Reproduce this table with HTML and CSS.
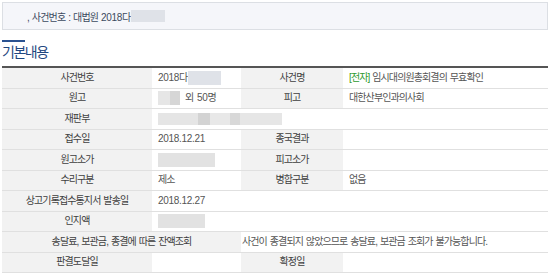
FILE: index.html
```html
<!DOCTYPE html>
<html lang="ko">
<head>
<meta charset="utf-8">
<link rel="stylesheet" href="styles.css">
</head>
<body>
<div class="page">
  <div class="summary">
    <span>, 사건번호 : 대법원 <span class="num">2018</span>다</span><span class="blur blur-top"></span>
  </div>
  <h2 class="section-title">기본내용</h2>
  <table class="info">
    <colgroup>
      <col class="c1"><col class="c2"><col class="c3"><col class="c4">
    </colgroup>
    <tr>
      <th>사건번호</th>
      <td><span class="inline"><span class="num">2018</span>다<span class="blur b-num"></span></span></td>
      <th>사건명</th>
      <td><span class="tag">[전자]</span> 임시대의원총회결의 무효확인</td>
    </tr>
    <tr>
      <th>원고</th>
      <td><span class="inline"><span class="blur b-name1"></span><span class="blur b-name2"></span><span class="gap">외 <span class="num">50</span>명</span></span></td>
      <th>피고</th>
      <td>대한산부인과의사회</td>
    </tr>
    <tr>
      <th>재판부</th>
      <td colspan="3"><span class="inline"><span class="blur b-court1"></span><span class="blur b-court2"></span><span class="blur b-court3"></span><span class="blur b-court4"></span><span class="blur b-court5"></span></span></td>
    </tr>
    <tr>
      <th>접수일</th>
      <td class="num">2018.12.21</td>
      <th>종국결과</th>
      <td></td>
    </tr>
    <tr>
      <th>원고소가</th>
      <td><span class="inline"><span class="blur b-amt"></span></span></td>
      <th>피고소가</th>
      <td></td>
    </tr>
    <tr>
      <th>수리구분</th>
      <td>제소</td>
      <th>병합구분</th>
      <td>없음</td>
    </tr>
    <tr>
      <th>상고기록접수통지서 발송일</th>
      <td colspan="3" class="num">2018.12.27</td>
    </tr>
    <tr>
      <th>인지액</th>
      <td colspan="3"><span class="inline"><span class="blur b-stamp"></span></span></td>
    </tr>
    <tr>
      <th colspan="2">송달료, 보관금, 종결에 따른 잔액조회</th>
      <td colspan="2" class="tight">사건이 종결되지 않았으므로 송달료, 보관금 조회가 불가능합니다.</td>
    </tr>
    <tr>
      <th>판결도달일</th>
      <td></td>
      <th>확정일</th>
      <td></td>
    </tr>
  </table>
</div>
</body>
</html>
```

FILE: styles.css
```css
html, body {
  margin: 0;
  padding: 0;
  background: #ffffff;
}
body {
  font-family: "Liberation Sans", "Noto Sans CJK KR", sans-serif;
  font-size: 10px;
  color: #555555;
}
.page {
  padding: 2px 2px 0 2px;
}
.num {
  letter-spacing: -0.3px;
}
.summary {
  height: 26px;
  border: 1px solid #dcdfe4;
  background: #f5f6fa;
  display: flex;
  align-items: center;
  padding-left: 24px;
  color: #3c4a60;
  font-size: 10px;
  letter-spacing: -0.85px;
  word-spacing: 1px;
}
.blur {
  display: inline-block;
  background: #dfe2e8;
}
.blur-top {
  width: 34px;
  height: 12px;
  margin-left: 1px;
}
.section-title {
  margin: 10px 0 0 0;
  font-size: 14px;
  font-weight: normal;
  line-height: 16px;
  color: #1f4880;
  letter-spacing: -1.5px;
}
.section-title::before {
  content: "";
  display: block;
  width: 23px;
  height: 2px;
  background: #2b5290;
  margin-bottom: 2px;
}
.info {
  width: 546px;
  margin-top: 6px;
  border-collapse: collapse;
  table-layout: fixed;
  border-top: 2px solid #555555;
}
.c1 { width: 150px; }
.c2 { width: 89px; }
.c3 { width: 102px; }
.c4 { width: 205px; }
.info th, .info td {
  height: 19.5px;
  padding: 0;
  line-height: 14px;
  vertical-align: middle;
  border-bottom: 1px solid #e0e0e0;
  font-size: 10px;
  white-space: nowrap;
  overflow: visible;
  word-spacing: 1px;
}
.info th {
  background: #f2f2f2;
  color: #3f3f3f;
  font-weight: normal;
  text-align: center;
  letter-spacing: -0.9px;
}
.info td {
  padding-left: 6px;
  color: #555555;
  text-align: left;
  letter-spacing: -0.9px;
}
.info td.num {
  letter-spacing: -0.3px;
}
.info td.tight {
  padding-left: 1px;
}
.inline {
  display: inline-flex;
  align-items: center;
  vertical-align: middle;
  height: 14px;
}
.tag {
  color: #2f9a2f;
}
.gap {
  margin-left: 5px;
  letter-spacing: -0.5px;
}
.b-num { width: 33px; height: 14px; margin-left: 1px; }
.b-name1 { width: 12px; height: 14px; background: #e6e6e6; }
.b-name2 { width: 10px; height: 14px; background: #d6d6d6; }
.b-court1 { width: 40px; height: 12px; background: #e5e5e5; }
.b-court2 { width: 12px; height: 12px; background: #d3d3d3; }
.b-court3 { width: 20px; height: 12px; background: #e8e8e8; }
.b-court4 { width: 10px; height: 12px; background: #d8d8d8; }
.b-court5 { width: 42px; height: 12px; background: #e6e6e6; }
.b-amt { width: 57px; height: 14px; background: #e2e2e2; }
.b-stamp { width: 47px; height: 14px; background: #e2e2e2; }
```
